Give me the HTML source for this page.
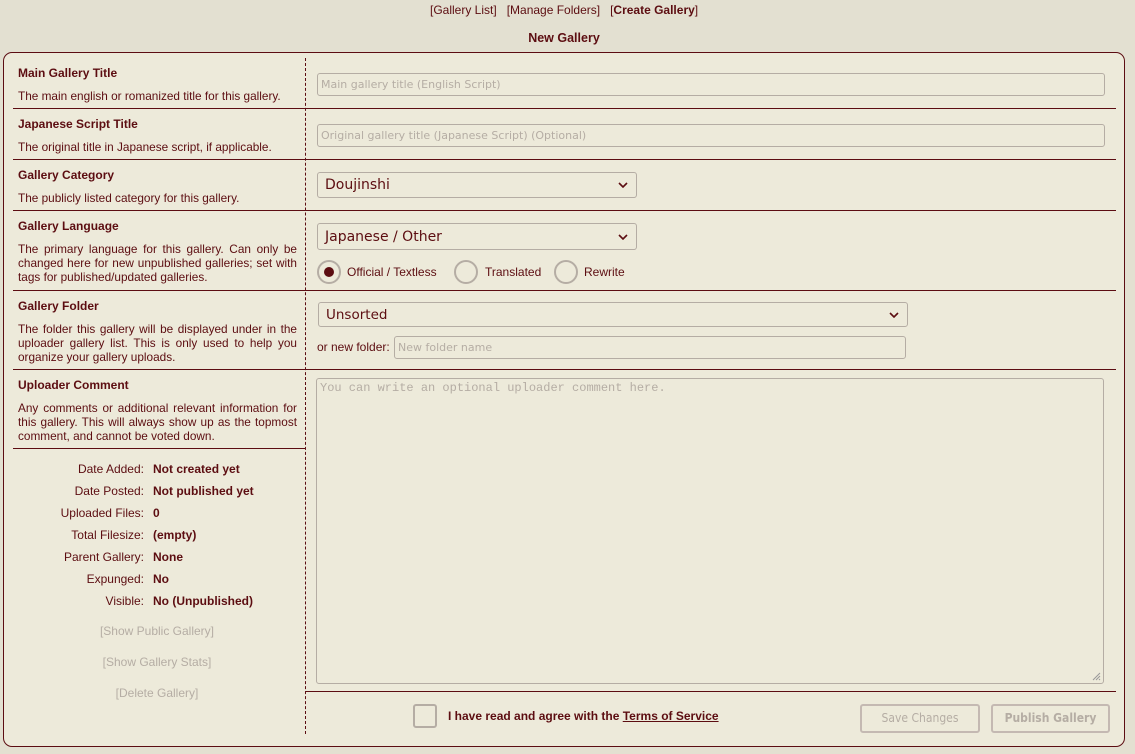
<!DOCTYPE html>
<html><head><meta charset="utf-8"><style>
*{box-sizing:border-box;margin:0;padding:0}
body{width:1135px;height:754px;background:#E3E0D1;font-family:"Liberation Sans",Arial,sans-serif;font-size:12px;color:#5C0D11;position:relative;overflow:hidden}
.a{position:absolute}
.panel{left:3px;top:52px;width:1122px;height:695px;background:#EDEADA;border:1px solid #5C0D12;border-radius:9px}
.h{position:absolute;height:1px;background:#5C0D12}
.t{font-weight:bold;font-size:12px}
.d{font-size:11.8px;line-height:14px;text-align:justify}
.inp{position:absolute;border:1px solid #B5ADA4;border-radius:3px;background:#EDEADA;color:#B5ADA4;font-family:"DejaVu Sans",sans-serif;font-size:11px;padding-left:3px;line-height:21px}
.sel{position:absolute;border:1px solid #B5ADA4;border-radius:3px;background:#EDEADA;color:#5C0D11;font-family:"DejaVu Sans",sans-serif;font-size:14px;padding-left:7px}
.sel svg{position:absolute;right:8px;top:50%;margin-top:-3px}
.rad{position:absolute;width:24px;height:24px;border:2px solid #B5ADA4;border-radius:50%}
.lbl{position:absolute;text-align:right;width:130px;left:14px}
.val{position:absolute;left:153px;font-weight:bold}
.lk{position:absolute;width:292px;left:11px;text-align:center;color:#B5ADA4}
.btn{position:absolute;border:2px solid #C4B9B2;border-radius:3px;color:#B5ADA4;font-family:"DejaVu Sans Condensed","DejaVu Sans",sans-serif;font-size:12px;text-align:center;line-height:25px}
</style></head><body>
<div class="a" style="left:430px;top:3px">[Gallery List] &nbsp; [Manage Folders] &nbsp; [<b>Create Gallery</b>]</div>
<div class="a t" style="left:0;width:1128px;text-align:center;top:31px;font-size:12.5px">New Gallery</div>
<div class="a panel"></div>
<div class="a" style="left:305px;top:58px;height:676px;border-left:1px dashed #5C0D12"></div>
<div class="h" style="left:13px;top:108px;width:1103px"></div>
<div class="h" style="left:13px;top:159px;width:1103px"></div>
<div class="h" style="left:13px;top:210px;width:1103px"></div>
<div class="h" style="left:13px;top:290px;width:1103px"></div>
<div class="h" style="left:13px;top:369px;width:1103px"></div>
<div class="h" style="left:13px;top:448px;width:292px"></div>
<div class="h" style="left:305px;top:691px;width:811px"></div>

<div class="a t" style="left:18px;top:66px">Main Gallery Title</div>
<div class="a d" style="left:18px;top:89px">The main english or romanized title for this gallery.</div>
<div class="a t" style="left:18px;top:117px">Japanese Script Title</div>
<div class="a d" style="left:18px;top:140px">The original title in Japanese script, if applicable.</div>
<div class="a t" style="left:18px;top:168px">Gallery Category</div>
<div class="a d" style="left:18px;top:191px">The publicly listed category for this gallery.</div>
<div class="a t" style="left:18px;top:219px">Gallery Language</div>
<div class="a d" style="left:18px;top:242px;width:279px">The primary language for this gallery. Can only be changed here for new unpublished galleries; set with tags for published/updated galleries.</div>
<div class="a t" style="left:18px;top:299px">Gallery Folder</div>
<div class="a d" style="left:18px;top:322px;width:279px">The folder this gallery will be displayed under in the uploader gallery list. This is only used to help you organize your gallery uploads.</div>
<div class="a t" style="left:18px;top:378px">Uploader Comment</div>
<div class="a d" style="left:18px;top:401px;width:279px">Any comments or additional relevant information for this gallery. This will always show up as the topmost comment, and cannot be voted down.</div>

<div class="lbl" style="top:462px">Date Added:</div><div class="val" style="top:462px">Not created yet</div>
<div class="lbl" style="top:484px">Date Posted:</div><div class="val" style="top:484px">Not published yet</div>
<div class="lbl" style="top:506px">Uploaded Files:</div><div class="val" style="top:506px">0</div>
<div class="lbl" style="top:528px">Total Filesize:</div><div class="val" style="top:528px">(empty)</div>
<div class="lbl" style="top:550px">Parent Gallery:</div><div class="val" style="top:550px">None</div>
<div class="lbl" style="top:572px">Expunged:</div><div class="val" style="top:572px">No</div>
<div class="lbl" style="top:594px">Visible:</div><div class="val" style="top:594px">No (Unpublished)</div>
<div class="lk" style="top:624px">[Show Public Gallery]</div>
<div class="lk" style="top:655px">[Show Gallery Stats]</div>
<div class="lk" style="top:686px">[Delete Gallery]</div>

<div class="inp" style="left:317px;top:73px;width:788px;height:23px">Main gallery title (English Script)</div>
<div class="inp" style="left:317px;top:124px;width:788px;height:23px">Original gallery title (Japanese Script) (Optional)</div>
<div class="sel" style="left:317px;top:172px;width:320px;height:26px;line-height:25px">Doujinshi<svg width="10" height="6"><path d="M1 1l4 4 4-4" stroke="#5C0D11" stroke-width="1.6" fill="none"/></svg></div>
<div class="sel" style="left:317px;top:223px;width:320px;height:27px;line-height:26px">Japanese / Other<svg width="10" height="6"><path d="M1 1l4 4 4-4" stroke="#5C0D11" stroke-width="1.6" fill="none"/></svg></div>
<div class="rad" style="left:317px;top:260px"><div style="position:absolute;left:5px;top:5px;width:10px;height:10px;border-radius:50%;background:#5C0D11"></div></div>
<div class="a" style="left:347px;top:265px">Official / Textless</div>
<div class="rad" style="left:454px;top:260px"></div>
<div class="a" style="left:485px;top:265px">Translated</div>
<div class="rad" style="left:554px;top:260px"></div>
<div class="a" style="left:584px;top:265px">Rewrite</div>
<div class="sel" style="left:318px;top:302px;width:590px;height:25px;line-height:24px;font-size:13.5px">Unsorted<svg width="10" height="6"><path d="M1 1l4 4 4-4" stroke="#5C0D11" stroke-width="1.6" fill="none"/></svg></div>
<div class="a" style="left:317px;top:340px">or new folder:</div>
<div class="inp" style="left:394px;top:336px;width:512px;height:23px">New folder name</div>
<div class="inp" style="left:316px;top:378px;width:788px;height:306px;font-family:'Liberation Mono',monospace;font-size:12px;line-height:19px">You can write an optional uploader comment here.
<svg class="a" style="right:2px;bottom:2px" width="9" height="9"><path d="M8 1L1 8M8 4L4 8M8 7L7 8" stroke="#999" stroke-width="1"/></svg></div>

<div class="a" style="left:413px;top:704px;width:24px;height:24px;border:2px solid #B5ADA4;border-radius:3px"></div>
<div class="a" style="left:448px;top:709px;font-weight:bold">I have read and agree with the <u>Terms of Service</u></div>
<div class="btn" style="left:860px;top:704px;width:120px;height:29px">Save Changes</div>
<div class="btn" style="left:991px;top:704px;width:119px;height:29px;font-weight:bold">Publish Gallery</div>
</body></html>
